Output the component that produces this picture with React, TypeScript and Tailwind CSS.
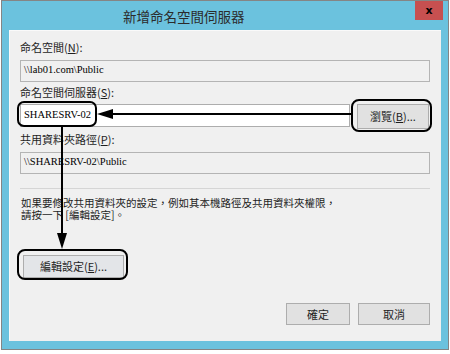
import React from "react";

const ui = { fontFamily: '"Noto Sans CJK TC", "Noto Sans", sans-serif' };
const serif = { fontFamily: '"Liberation Serif", "Noto Sans CJK TC", serif' };

function Label({ text, hotkey }: { text: string; hotkey: string }) {
  return (
    <div className="mt-[3px] text-[11px] leading-[14px] text-[#1e1e1e]" style={ui}>
      {text}(<span className="underline">{hotkey}</span>):
    </div>
  );
}

function ReadOnlyBox({ value, className }: { value: string; className?: string }) {
  return (
    <div
      className={`h-[22px] w-[410px] border border-[#b4b4b4] bg-[#f0f0f0] pl-[3px] text-[10.5px] leading-[17px] text-black ${className ?? ""}`}
      style={serif}
    >
      {value}
    </div>
  );
}

function Button({ children, className }: { children: React.ReactNode; className?: string }) {
  return (
    <div
      className={`flex items-center justify-center border border-[#adadad] bg-[#e1e1e1] text-[11px] text-[#1e1e1e] ${className ?? ""}`}
      style={ui}
    >
      {children}
    </div>
  );
}

export default function App() {
  return (
    <div className="relative h-[354px] w-[450px] overflow-hidden bg-white">
      {/* ventana */}
      <div className="ml-[1px] flex h-[350px] w-[448px] flex-col border border-[#858585] bg-[#6bc2de]">
        <div className="relative flex h-[29px] shrink-0">
          <div className="ml-[121px] mt-[6px] text-[13.5px] leading-[18px] text-[#2b2b2b]" style={ui}>
            新增命名空間伺服器
          </div>
          <div className="absolute right-[5px] top-0 flex h-[19px] w-[28px] items-center justify-center bg-[#c75050] text-[11px] font-bold leading-none text-black" style={{ fontFamily: '"DejaVu Sans", sans-serif' }}>
            x
          </div>
        </div>

        <div className="mx-[7px] flex h-[311px] flex-col border-l border-t border-[#fafafa] bg-[#f0f0f0] px-[10px]">
          <div className="mt-[6px]">
            <Label text="命名空間" hotkey="N" />
          </div>
          <ReadOnlyBox value="\\lab01.com\Public" className="mt-[6px] h-[21px]" />

          <Label text="命名空間伺服器" hotkey="S" />
          <div className="mt-[5px] flex gap-[7px]">
            <div
              className="h-[23px] w-[330px] border border-[#adadad] bg-white pl-[3px] text-[10.5px] leading-[19px] text-black"
              style={serif}
            >
              SHARESRV-02
            </div>
            <Button className="h-[25px] w-[72px]">
              瀏覽(<span className="underline">B</span>)...
            </Button>
          </div>

          <Label text="共用資料夾路徑" hotkey="P" />
          <ReadOnlyBox value="\\SHARESRV-02\Public" className="mt-[6px]" />

          <div className="mt-[14px] h-px w-[410px] bg-[#d5d5d5]" />

          <p className="mt-[8px] pl-[1px] text-[10.5px] leading-[12px] text-[#1e1e1e]" style={ui}>
            如果要修改共用資料夾的設定，例如其本機路徑及共用資料夾權限，
            <br />
            請按一下 [編輯設定]。
          </p>

          <Button className="ml-[3px] mt-[34px] h-[23px] w-[101px] border-[#8fa3b8] bg-[#e3e5e8]">
            編輯設定(<span className="underline">E</span>)...
          </Button>

          <div className="mt-[25px] flex justify-end gap-[8px] pr-[1px]">
            <Button className="h-[22px] w-[64px]">確定</Button>
            <Button className="h-[22px] w-[72px]">取消</Button>
          </div>
        </div>
      </div>

      {/* anotaciones */}
      <div className="absolute left-[17px] top-[101px] h-[26px] w-[80px] rounded-[7px] border-2 border-black" />
      <div className="absolute left-[351px] top-[99px] h-[33px] w-[81px] rounded-[8px] border-2 border-black" />
      <div className="absolute left-[17px] top-[249px] h-[31px] w-[111px] rounded-[8px] border-2 border-black" />
      <svg className="absolute left-0 top-0" width="450" height="354" viewBox="0 0 450 354">
        <line x1="112" y1="114" x2="352" y2="114" stroke="black" strokeWidth="2" />
        <polygon points="97,114 113,109 113,119" fill="black" />
        <line x1="62" y1="127" x2="62" y2="234" stroke="black" strokeWidth="2" />
        <polygon points="62,249 57,233 67,233" fill="black" />
      </svg>
    </div>
  );
}
